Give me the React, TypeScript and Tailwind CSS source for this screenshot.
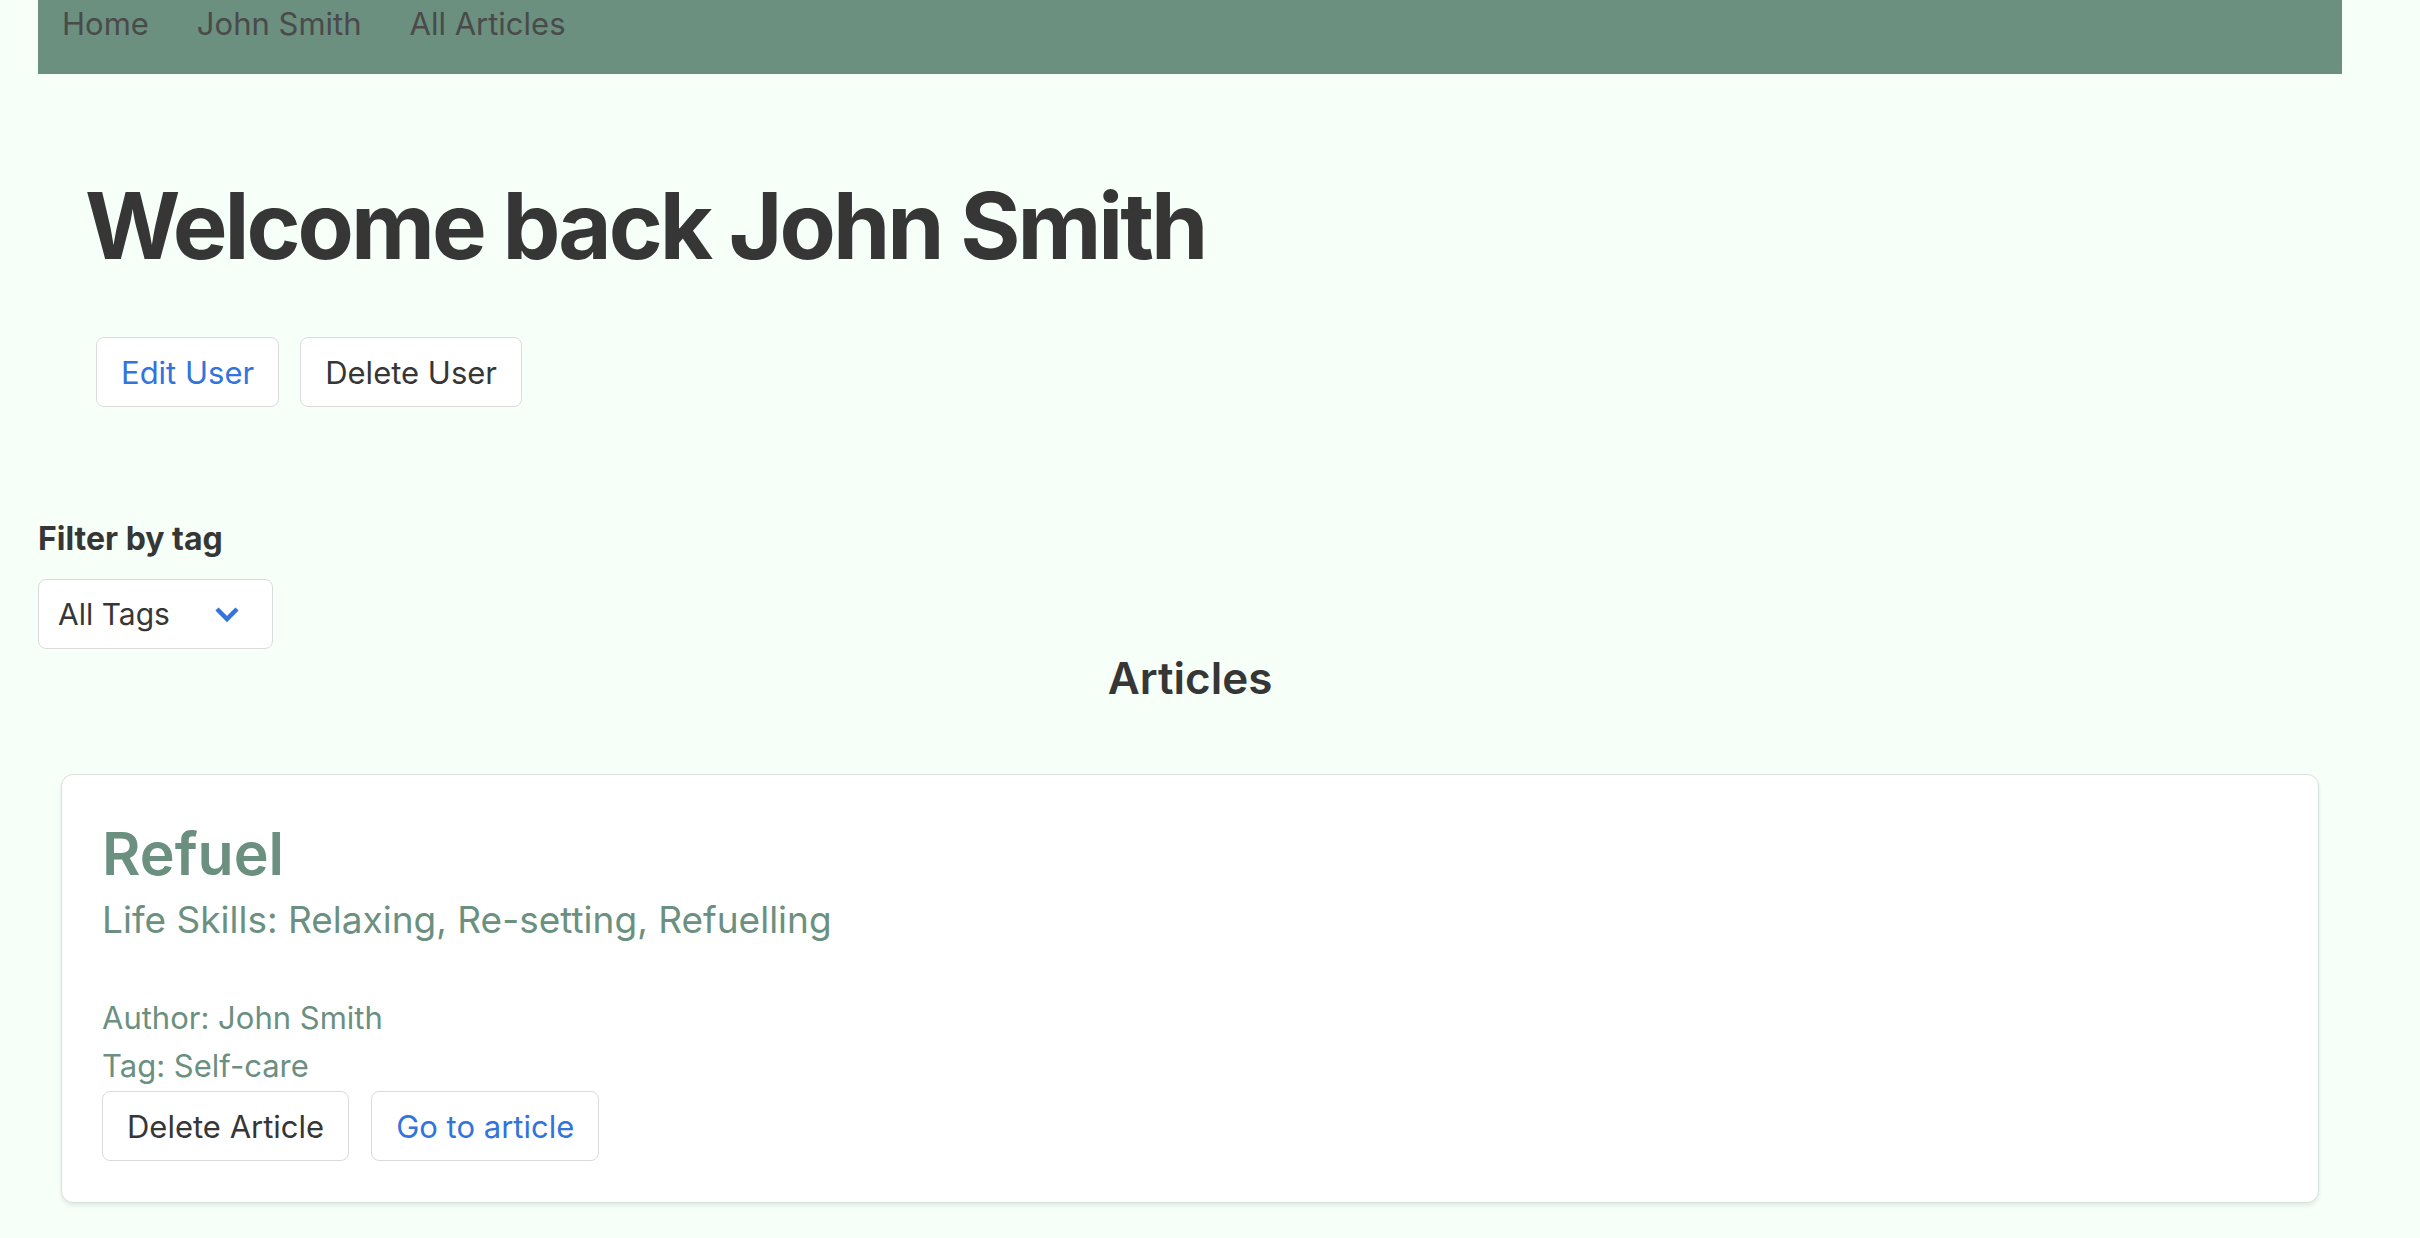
import React from 'react';

const navLinks = ['Home', 'John Smith', 'All Articles'];

const OutlineButton: React.FC<{ label: string; blue?: boolean; className?: string }> = ({ label, blue, className }) => (
  <button
    className={`h-[70px] rounded-[8px] border border-[#dbdbdb] bg-white px-[24px] text-[31px] leading-none ${
      blue ? 'text-[#3273dc]' : 'text-[#363636]'
    } ${className ?? ''}`}
  >
    {label}
  </button>
);

const ArticleCard: React.FC = () => (
  <div className="mx-[23px] mt-[74px] rounded-[12px] border border-[#d8e0dc] bg-white pl-[40px] pt-[49px] pb-[41px] shadow-[0_3px_4px_rgba(10,10,10,0.08)]">
    <h2 className="text-[59px] font-semibold leading-[60px] text-[#6b9080]">Refuel</h2>
    <p className="mt-[17px] text-[37px] leading-[37px] text-[#6b9080]">Life Skills: Relaxing, Re-setting, Refuelling</p>
    <p className="mt-[64px] text-[31px] leading-[31px] text-[#6b9080]">Author: John Smith</p>
    <p className="mt-[17px] text-[31px] leading-[31px] text-[#6b9080]">Tag: Self-care</p>
    <div className="mt-[10px] flex gap-[22px]">
      <OutlineButton label="Delete Article" />
      <OutlineButton label="Go to article" blue />
    </div>
  </div>
);

export default function App() {
  return (
    <div className="min-h-screen bg-[#f6fff8] font-['Inter','Noto_Sans',sans-serif]">
      <div className="ml-[38px] mr-[78px] pb-[40px]">
        <nav className="flex h-[74px] items-start bg-[#6b9080] pt-[7.5px]">
          {navLinks.map((link) => (
            <a key={link} className="px-[24px] text-[31px] leading-[31px] text-[#4a4a4a]">
              {link}
            </a>
          ))}
        </nav>

        <section className="pl-[47px]">
          <h1 className="mt-[105.5px] text-[92px] font-bold leading-[92px] tracking-[-0.033em] text-[#363636]">
            Welcome back John Smith
          </h1>
          <div className="ml-[11px] mt-[65.5px] flex gap-[21px]">
            <OutlineButton label="Edit User" blue />
            <OutlineButton label="Delete User" />
          </div>
        </section>

        <div className="mt-[116px]">
          <label className="block text-[32px] font-bold leading-[32px] text-[#363636]">Filter by tag</label>
          <div className="mt-[24px] flex h-[70px] w-[235px] items-center justify-between rounded-[8px] border border-[#dbdbdb] bg-white pl-[19px] pr-[32px]">
            <span className="text-[30px] leading-none text-[#363636]">All Tags</span>
            <svg width="26" height="17" viewBox="0 0 26 17" fill="none">
              <polyline points="3,3 13,13 23,3" stroke="#3273dc" strokeWidth="4.5" />
            </svg>
          </div>
        </div>

        <h3 className="mt-[7px] text-center text-[44px] font-semibold leading-[44px] text-[#363636]">Articles</h3>

        <ArticleCard />
      </div>
    </div>
  );
}
